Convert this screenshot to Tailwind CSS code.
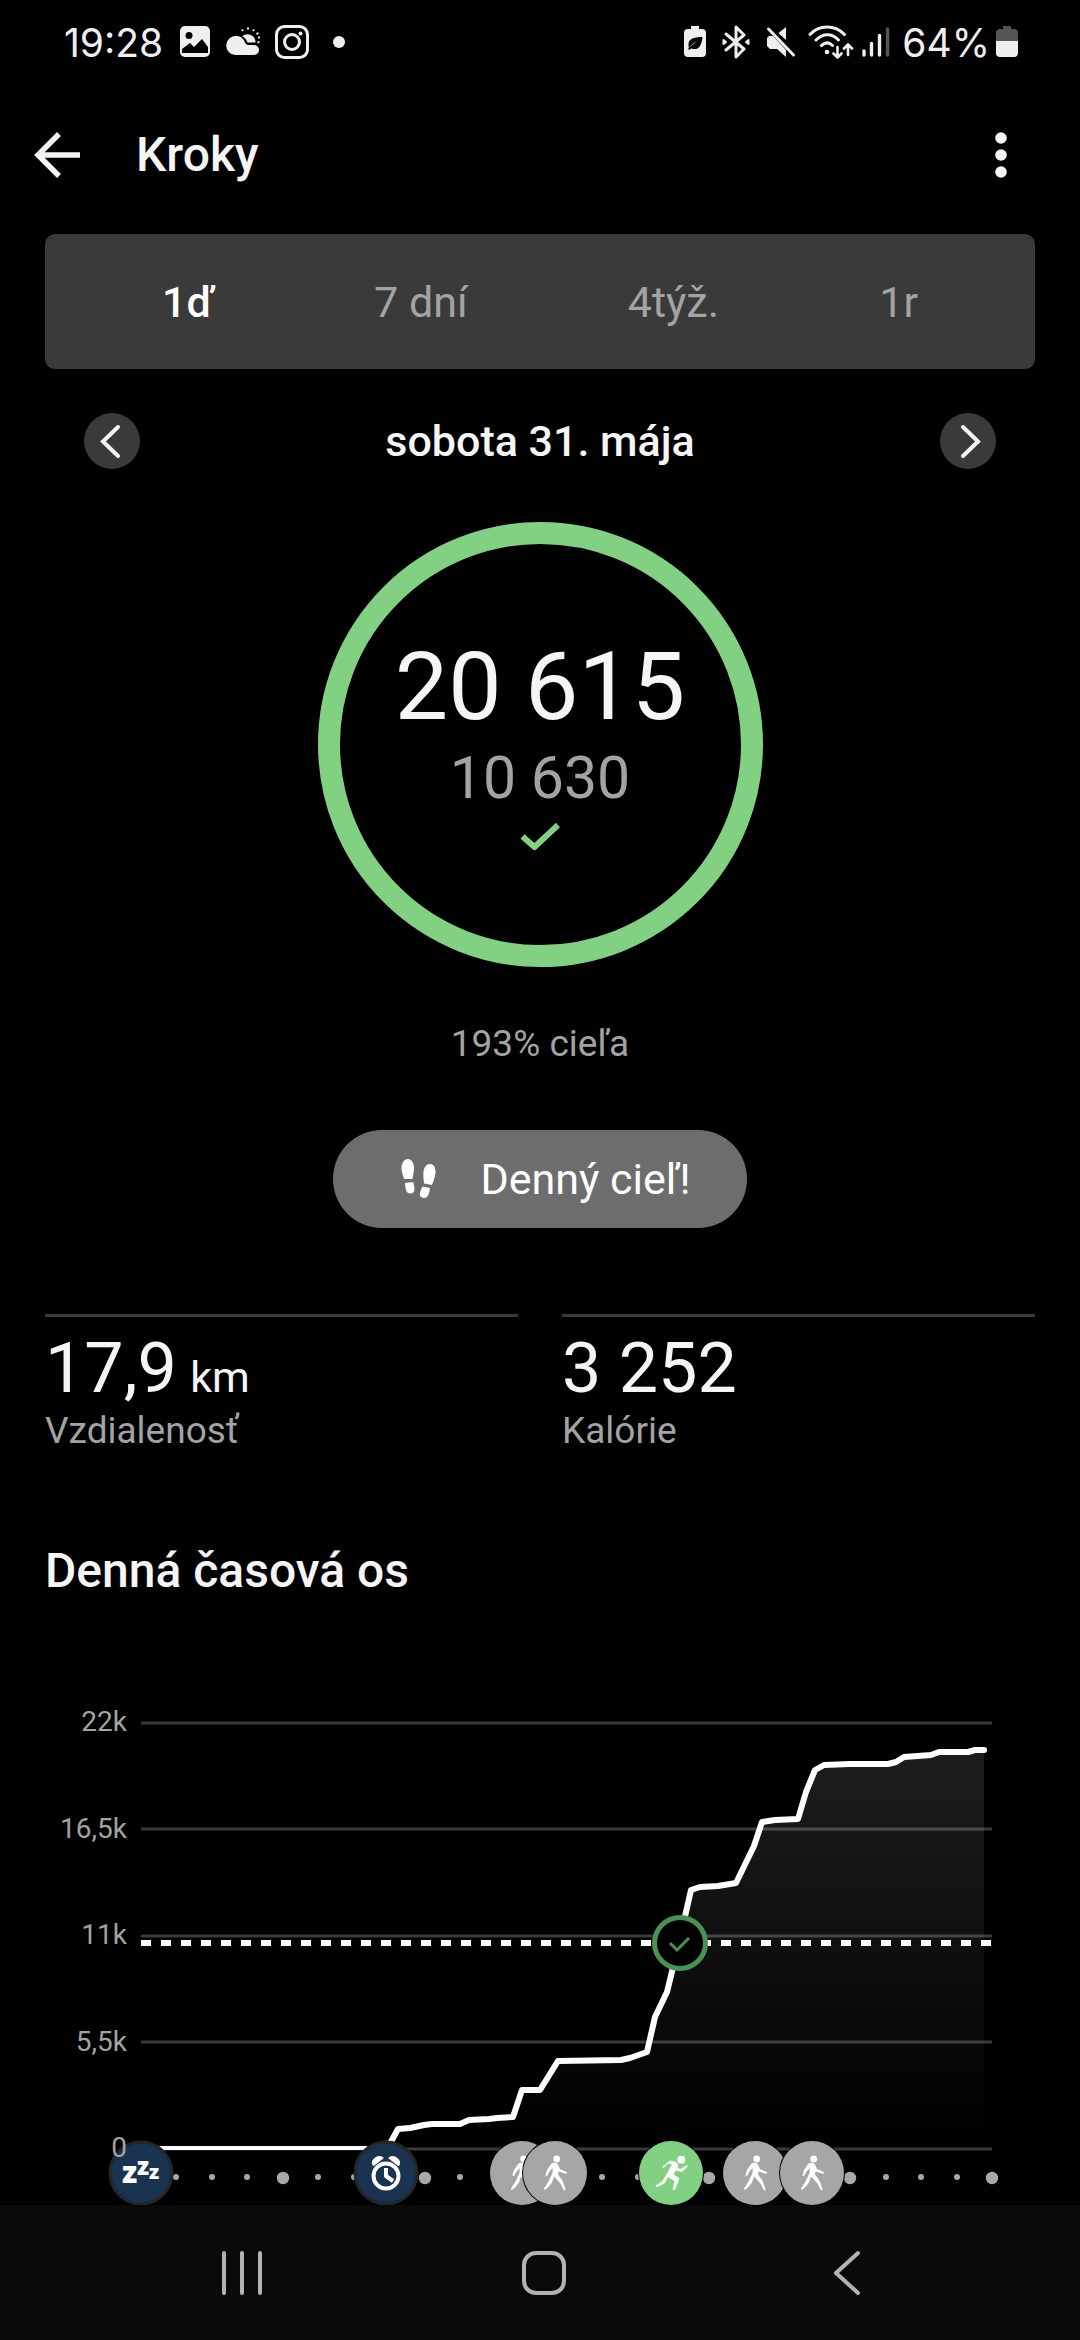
<!DOCTYPE html>
<html lang="sk">
<head>
    <meta charset="UTF-8">
    <meta name="viewport" content="width=device-width, initial-scale=1.0">
    <title>Kroky</title>
    <script src="https://cdn.jsdelivr.net/npm/@tailwindcss/browser@4"></script>
</head>

<body class="bg-black">
    <div class="min-h-screen flex flex-col bg-black text-[#f5f5f5] font-['Roboto',sans-serif]">
        <!-- status bar -->
        <div class="h-[84px] pl-16 pr-[62px] flex items-center justify-between text-[#efefef] font-['Inter',sans-serif]">
            <div class="flex items-center">
                <span class="text-[39px] leading-none">19:28</span>
                <svg class="ml-4 w-8 h-8" viewBox="0 0 32 32" fill="currentColor">
                    <path fill-rule="evenodd" d="M6 0h20a5 5 0 0 1 5 5v21a5 5 0 0 1-5 5H6a5 5 0 0 1-5-5V5a5 5 0 0 1 5-5zM10 6a3.5 3.5 0 1 0 0 7 3.5 3.5 0 0 0 0-7zM3 23v4h26v-6l-6-8-8 8-4-4z" />
                </svg>
                <svg class="ml-[14px] w-9 h-8" viewBox="0 0 36 32" fill="currentColor">
                    <path d="M10 29a9.5 9.5 0 1 1 1.500-19c4 0 7 2.500 8.500 6.500 1 2 2 2.500 4 2.500h5a5 5 0 0 1 0 10z" />
                    <path d="M17 10.500a8 8 0 0 1 13.500 6H24c-1.500 0-2-.5-2.500-2-1-2-2.500-3.500-4.500-4z" />
                    <path d="M23 1.500v2M17 3.500l1 1.500M29 3.500l-1 1.500M33.500 7l-2 1.200M35 11.500h-2M34.500 16.500l-2-.5" stroke="currentColor" stroke-width="2" />
                </svg>
                <svg class="ml-[14px] w-[34px] h-[34px]" viewBox="0 0 34 34" fill="none" stroke="currentColor" stroke-width="3">
                    <rect x="1.500" y="1.500" width="31" height="31" rx="8" />
                    <circle cx="17" cy="17" r="7.500" />
                    <circle cx="25.500" cy="8.500" r="2" fill="currentColor" stroke="none" />
                </svg>
                <span class="ml-6 w-3 h-3 rounded-full bg-[#efefef]"></span>
            </div>
            <div class="flex items-center">
                <svg class="w-[22px] h-8" viewBox="0 0 22 32" fill="currentColor">
                    <path fill-rule="evenodd" d="M7 0h8v3h3a4 4 0 0 1 4 4v20a4 4 0 0 1-4 4H4a4 4 0 0 1-4-4V7a4 4 0 0 1 4-4h3zM18.500 11c-7 0-14 1-14 7 0 1.500 0 3 .5 4 2-3 4-5 8-6.500-4 3-7 5-9.500 8 3 0 3-.5 4-1 6 2 10-1 11-11.500z" />
                </svg>
                <svg class="ml-4 w-7 h-[34px]" viewBox="0 0 28 34" fill="none" stroke="currentColor" stroke-width="3" stroke-linejoin="round" stroke-linecap="round">
                    <path d="M4 9l18 15-8 8V2l8 8L4 25" />
                    <path d="M1.500 15v4l2.500-2zM26.500 15v4L24 17z" stroke-width="2" fill="currentColor" />
                </svg>
                <svg class="ml-4 w-[30px] h-8" viewBox="0 0 30 32" fill="currentColor">
                    <path d="M20 1v13l-7.500-7zM1 12l2-2h4l13 14v7l-9-8H4l-3-3z" />
                    <path d="M2.500 3l25 26" stroke="currentColor" stroke-width="3" stroke-linecap="round" />
                </svg>
                <svg class="ml-3 w-[46px] h-[34px]" viewBox="0 0 46 34" fill="none" stroke="currentColor" stroke-width="3" stroke-linecap="round">
                    <path d="M2 9.500C11-.5 27-.5 36.500 9.500M8 15c7-7 16-7 22.500 0M13.500 20.500c4-3.500 7.500-3.500 11 0" />
                    <circle cx="19" cy="27" r="2.300" fill="currentColor" stroke="none" />
                    <path d="M29.500 22v10M25.500 28.500l4 4 4-4M40 30V20M36 23.500l4-4 4 4" stroke-width="2.600" stroke-linejoin="round" />
                </svg>
                <svg class="ml-2 w-7 h-8" viewBox="0 0 28 32" fill="none" stroke="currentColor" stroke-width="3.400" stroke-linecap="round">
                    <path d="M2 25v4M9.500 17.500V29M17.500 9.500V29" />
                    <path d="M25.500 3v26" stroke="#555" />
                </svg>
                <span class="ml-3 text-[39px] leading-none">64%</span>
                <svg class="ml-[6px] w-[22px] h-8" viewBox="0 0 22 32">
                    <path fill="#555" d="M7 0h8v3h3a4 4 0 0 1 4 4v8H0V7a4 4 0 0 1 4-4h3z" />
                    <path fill="currentColor" d="M0 15h22v12a4 4 0 0 1-4 4H4a4 4 0 0 1-4-4z" />
                </svg>
            </div>
        </div>

        <header class="h-[142px] px-8 flex items-center">
            <button class="w-12 h-12" aria-label="Späť">
                <svg class="w-12 h-12" viewBox="0 0 48 48" fill="none" stroke="currentColor" stroke-width="5.500">
                    <path d="M48 24H7M27 3L6 24l21 21" />
                </svg>
            </button>
            <h1 class="ml-14 text-[48px] leading-14 font-medium">Kroky</h1>
            <button class="ml-auto w-[94px] h-12 flex items-center justify-center" aria-label="Viac">
                <svg class="w-3 h-12" viewBox="0 0 12 48" fill="currentColor">
                    <circle cx="6" cy="7" r="5.800" />
                    <circle cx="6" cy="24" r="5.800" />
                    <circle cx="6" cy="41" r="5.800" />
                </svg>
            </button>
        </header>

        <main class="flex-1 flex flex-col">
            <nav class="mx-[45px] mt-2 h-[135px] px-[117px] rounded-[10px] bg-[#3a3a3a] flex items-center justify-between text-[43px] leading-14 text-[#a3a3a3]">
                <button class="font-medium text-white">1ď</button>
                <button>7 dní</button>
                <button>4týž.</button>
                <button>1r</button>
            </nav>

            <div class="h-36 px-[84px] flex items-center justify-between">
                <button class="w-14 h-14 rounded-full bg-[#3a3a3a]" aria-label="Predchádzajúci deň">
                    <svg class="w-14 h-14" viewBox="0 0 56 56" fill="none" stroke="currentColor" stroke-width="4" stroke-linecap="round">
                        <path d="M34 14L19 28.500 34 43" />
                    </svg>
                </button>
                <h2 class="text-[43px] leading-14 font-medium">sobota 31. mája</h2>
                <button class="w-14 h-14 rounded-full bg-[#3a3a3a]" aria-label="Nasledujúci deň">
                    <svg class="w-14 h-14" viewBox="0 0 56 56" fill="none" stroke="currentColor" stroke-width="4" stroke-linecap="round">
                        <path d="M23 14l15 14.500L23 43" />
                    </svg>
                </button>
            </div>

            <section class="mt-[9px] flex flex-col items-center">
                <div class="w-[445px] h-[445px] rounded-full border-[22px] border-[#82d182] flex flex-col items-center justify-center">
                    <div class="text-[95px] leading-24">20 615</div>
                    <div class="mt-[11px] text-[59px] leading-16 text-[#a3a3a3]">10 630</div>
                    <svg class="mt-[13px] w-10 h-7" viewBox="0 0 40 28" fill="none" stroke="#82d182" stroke-width="6" stroke-linejoin="round">
                        <path d="M2.500 13.500L14.500 24 38 2" />
                    </svg>
                </div>
                <p class="mt-[53px] text-[37px] leading-12 text-[#a3a3a3]">193% cieľa</p>
                <button class="mt-[62px] h-[98px] pl-[68px] pr-[57px] rounded-full bg-[#6d6d6d] text-white text-[43px] flex items-center">
                    <svg class="w-9 h-10" viewBox="0 0 36 40" fill="currentColor">
                        <path d="M7 0c3.500 0 6 4 6 9 0 4-1 7-1.500 11H3C2 16 .5 13 .5 9 .5 4 3 0 7 0zM4 24l8-1c1 3 1.500 5 1.500 7 0 3-2 4.500-4 4.500C5 34.500 4.500 30 4 24z" />
                        <path d="M29 5c4 0 6 4 5.500 9-.5 4-2 8-3.500 12l-8-1.500C22.500 20 22 17 22.500 13c.5-5 3-8 6.500-8zM21.500 27.500l7.500 1.500c-.5 5-2 10-6 10-3 0-5-2.500-4-5.500.5-2 1.500-4 2.500-6z" />
                    </svg>
                    <span class="ml-11">Denný cieľ!</span>
                </button>
            </section>

            <section class="mx-[45px] mt-[86px] grid grid-cols-2 gap-11">
                <div class="border-t-3 border-[#3a3a3a] pt-3">
                    <div class="text-[70px] leading-[78px]">17,9 <span class="-ml-1 text-[43px] leading-none">km</span></div>
                    <div class="text-[37px] leading-12 text-[#a3a3a3]">Vzdialenosť</div>
                </div>
                <div class="border-t-3 border-[#3a3a3a] pt-3">
                    <div class="text-[70px] leading-[78px]">3 252</div>
                    <div class="text-[37px] leading-12 text-[#a3a3a3]">Kalórie</div>
                </div>
            </section>

            <h2 class="mx-[45px] mt-22 text-[48px] leading-14 font-medium">Denná časová os</h2>

            <!-- daily steps chart -->
            <svg class="w-full" viewBox="0 0 1080 606" fill="none">
                <defs>
                    <linearGradient id="area" x1="0" y1="151" x2="0" y2="550" gradientUnits="userSpaceOnUse">
                        <stop offset="0" stop-color="#fff" stop-opacity=".115" />
                        <stop offset="1" stop-color="#fff" stop-opacity="0" />
                    </linearGradient>
                    <clipPath id="plot">
                        <rect x="141" y="100" width="860" height="451" />
                    </clipPath>
                    <g id="walker">
                        <circle r="33" fill="#000" />
                        <circle r="32" fill="#a6a6a6" />
                        <circle cx="1.700" cy="-14" r="3.400" fill="#fff" />
                        <path fill="#fff" d="M-3.500-9.500c2-1.500 5-1 6.500 1L5-4l6.500 3c1 .6.500 2-.6 1.700L3.500-1.500 3 1.500c1.500 2.500 4 4.500 5 7.500l2.500 7c.5 1.500-1.200 1.800-1.800.7L5.500 10.500-1 3.500l-2 6c-1.500 2.500-4 5-6.500 7-1 .7-2-.2-1.300-1.200l4.300-6.800L-2.500 0l.3-5-3.300 3.500-2.200 4c-.6 1-2 .5-1.700-.6L-8-3z" />
                    </g>
                </defs>

                <path d="M141 124h851M141 230h851M141 337h851M141 443h851M141 550h851" stroke="#3a3a3a" stroke-width="3" />
                <g clip-path="url(#plot)">
                    <path fill="url(#area)" d="M388 549L398 530 410 529 424 526 432 525 460 525 469 521 489 520 497 519 513 518 522 491 540 491 558 462 621 461 630 459 647 453 655 418 667 393 679 344 691 291 700 288 718 287 736 284 754 247 762 223 775 221 798 220 806 193 815 171 824 166 850 165 888 165 896 163 904 158 931 156 939 153 968 153 975 151 984 151V550H388z" />
                    <path stroke="#fff" stroke-width="6" stroke-linejoin="round" stroke-linecap="round" d="M141 550H387L398 530 410 529 424 526 432 525 460 525 469 521 489 520 497 519 513 518 522 491 540 491 558 462 621 461 630 459 647 453 655 418 667 393 679 344 691 291 700 288 718 287 736 284 754 247 762 223 775 221 798 220 806 193 815 171 824 166 850 165 888 165 896 163 904 158 931 156 939 153 968 153 975 151 984 151" />
                </g>
                <path d="M141 344h851" stroke="#fff" stroke-width="6" stroke-dasharray="10 10" />

                <!-- goal reached -->
                <circle cx="680" cy="344" r="25.500" fill="#000" stroke="#4b9154" stroke-width="5" />
                <path d="M670 344l7 7 12-12" stroke="#4b9154" stroke-width="3" />

                <!-- hours -->
                <g fill="#a9a9a9">
                    <circle cx="176" cy="578" r="3" /><circle cx="212" cy="578" r="3" /><circle cx="247" cy="578" r="3" /><circle cx="283" cy="579" r="6.200" />
                    <circle cx="318" cy="578" r="3" /><circle cx="354" cy="578" r="3" /><circle cx="425" cy="579" r="6.200" />
                    <circle cx="460" cy="578" r="3" /><circle cx="602" cy="578" r="3" /><circle cx="638" cy="578" r="3" /><circle cx="709" cy="579" r="6.200" />
                    <circle cx="850" cy="579" r="6.200" /><circle cx="886" cy="578" r="3" /><circle cx="921" cy="578" r="3" /><circle cx="957" cy="578" r="3" />
                    <circle cx="992" cy="579" r="6.200" />
                </g>

                <!-- sleep -->
                <circle cx="141" cy="574" r="31" fill="#1a3350" stroke="#22272c" stroke-width="3" />
                <g fill="#fff" class="font-['Open_Sans',sans-serif] font-extrabold">
                    <text x="122" y="584" font-size="30">z</text>
                    <text x="137" y="576" font-size="24">z</text>
                    <text x="149" y="580" font-size="20">z</text>
                </g>

                <!-- wake up -->
                <circle cx="386" cy="574" r="31" fill="#1a3350" stroke="#22272c" stroke-width="3" />
                <g stroke="#fff" stroke-width="4">
                    <circle cx="386" cy="577" r="12.500" />
                    <path d="M386 569v8l7 5" stroke-linejoin="round" />
                    <path d="M373.500 566c-2.500-4.500 4-10 9-7zM398.500 566c2.500-4.500-4-10-9-7z" fill="#fff" stroke-width="2" stroke-linejoin="round" />
                </g>

                <use href="#walker" x="522" y="574" />
                <use href="#walker" x="555" y="574" />
                <g transform="translate(671 574)">
                    <circle r="33" fill="#000" />
                    <circle r="32" fill="#82d182" />
                    <circle cx="10.300" cy="-13.300" r="3.900" fill="#fff" />
                    <path fill="#fff" d="M-1-12.500C2-12 6-11.500 7-8.500c.3 1.500-.5 2.500 0 3.500l3 .8 5.500-3.500c1-.5 1.800.7 1 1.500L11-1 5-2.500 2.500 1.500l5 3c1 1 .8 2 .3 3L4 16.500c-.6 1.300-2.500.8-2.200-.5L3.500 8-3 4l-3.500 6.500L-14 14c-1.500.4-2-1-.8-1.700l6-4L-3.500-.5 1-8.500l-4.500-.8-3.500 4c-1 .8-2-.2-1.400-1.200z" />
                </g>
                <use href="#walker" x="755" y="574" />
                <use href="#walker" x="812" y="574" />

                <g fill="#a3a3a3" font-size="28" text-anchor="end">
                    <text x="127" y="132">22k</text>
                    <text x="127" y="239">16,5k</text>
                    <text x="127" y="345">11k</text>
                    <text x="127" y="452">5,5k</text>
                    <text x="127" y="558">0</text>
                </g>
            </svg>
        </main>

        <!-- system navigation -->
        <footer class="h-[135px] pl-[91px] pr-[83px] grid grid-cols-3 items-center justify-items-center bg-[#0a0a0a] text-[#b3b3b3]">
            <button aria-label="Posledné aplikácie">
                <svg class="w-12 h-12" viewBox="0 0 48 48" fill="none" stroke="currentColor" stroke-width="4" stroke-linecap="round">
                    <path d="M6 4v40M24 4v40M42 4v40" />
                </svg>
            </button>
            <button aria-label="Domov">
                <svg class="w-12 h-12" viewBox="0 0 48 48" fill="none" stroke="currentColor" stroke-width="4">
                    <rect x="4" y="4" width="40" height="40" rx="12" />
                </svg>
            </button>
            <button aria-label="Naspäť">
                <svg class="w-12 h-12" viewBox="0 0 48 48" fill="none" stroke="currentColor" stroke-width="4" stroke-linecap="round" stroke-linejoin="round">
                    <path d="M36 4L14 24l22 20" />
                </svg>
            </button>
        </footer>
    </div>
</body>

</html>
